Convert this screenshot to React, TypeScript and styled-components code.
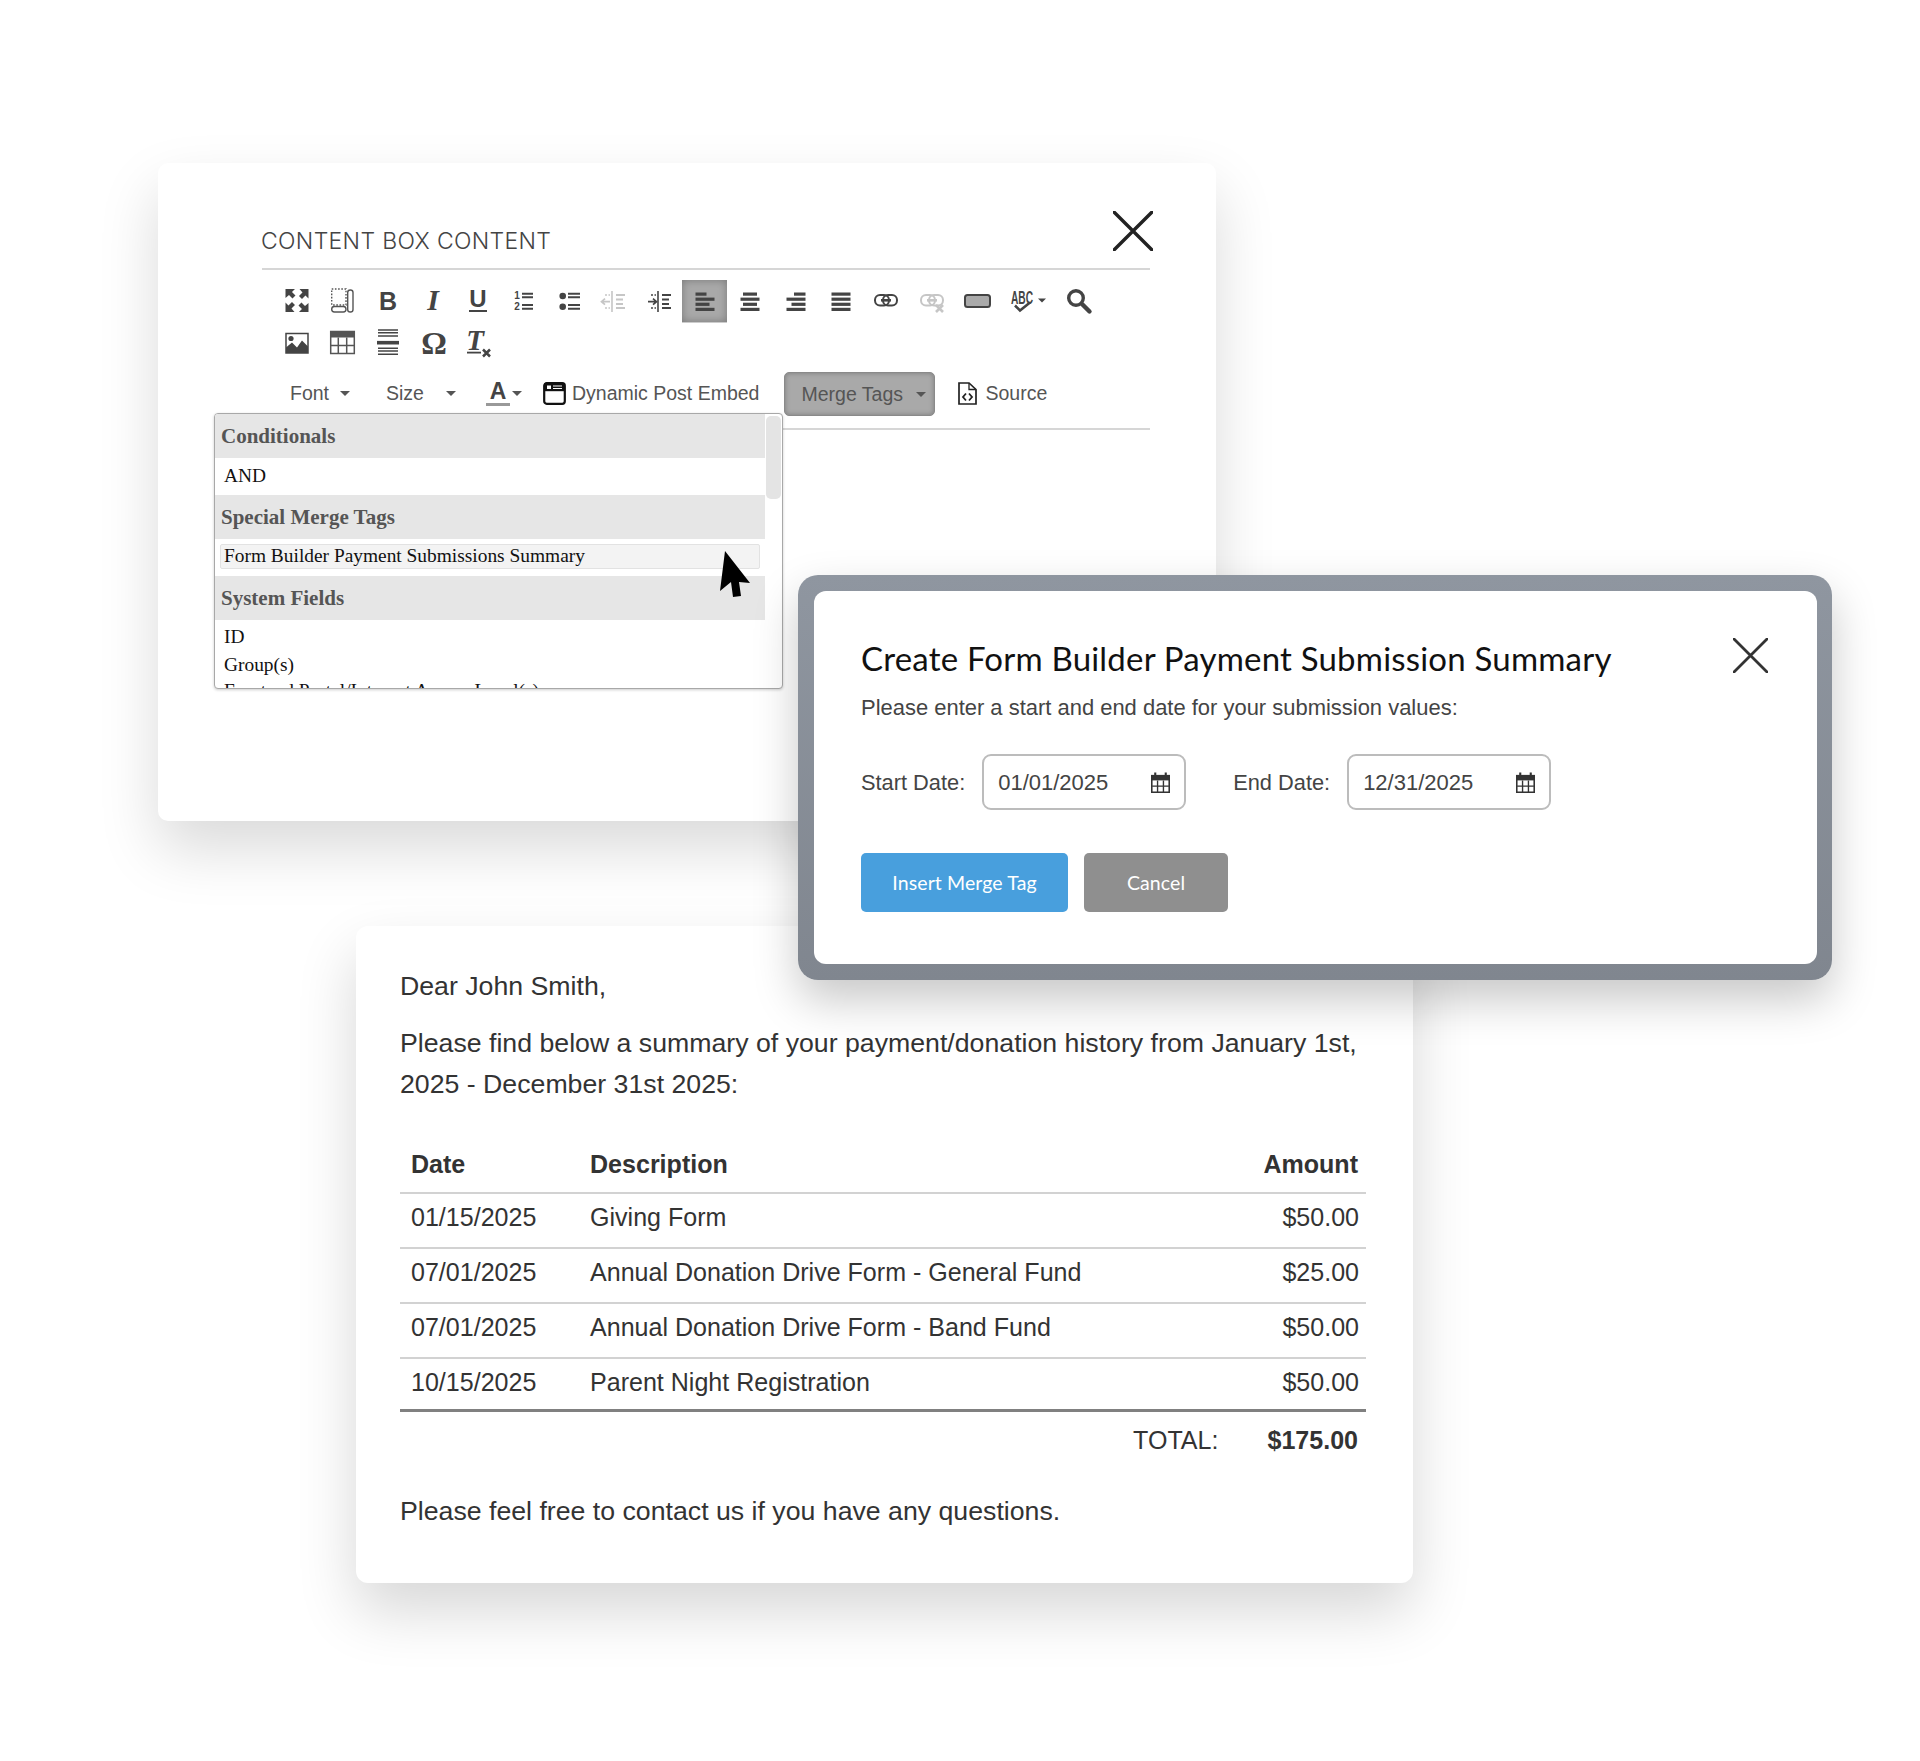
import { ReactNode } from 'react';
import styled, { createGlobalStyle } from 'styled-components';

const GlobalStyle = createGlobalStyle`
    html, body {
        margin: 0;
        padding: 0;
        background: #fff;
    }
    * {
        box-sizing: border-box;
    }
`

const Canvas = styled('div')`
    position: relative;
    width: 1920px;
    height: 1761px;
    overflow: hidden;
    background: #fff;
    font-family: "Liberation Sans", Arial, sans-serif;
`

const EditorCard = styled('section')`
    position: absolute;
    left: 158px;
    top: 163px;
    width: 1058px;
    height: 658px;
    padding: 48px 66px 0 104px;
    background: #fff;
    border-radius: 10px;
    box-shadow: 0 28px 60px rgba(0, 0, 0, 0.15);
`

const EditorHeader = styled('header')`
    display: flex;
    justify-content: space-between;
    align-items: flex-start;
    width: 888px;
    height: 59px;
    border-bottom: 2px solid #d6d6d6;
`

const EditorTitle = styled('h2')`
    margin: 16px 0 0 -1px;
    font-family: Inter, sans-serif;
    font-size: 23px;
    line-height: 28px;
    font-weight: 300;
    color: #444;
    letter-spacing: 0.33px;
`

const CrossIcon = styled('svg')<{ $bleed?: number }>`
    margin-right: ${p => -(p.$bleed ?? 0)}px;
    flex: none;
`

const ToolRow = styled('div')`
    display: flex;
    padding-left: 12px;
    height: 43px;
`

const ToolRows = styled('div')`
    margin-top: 10px;
`

const ToolButton = styled('div')<{ $active?: boolean; $w?: number }>`
    flex: none;
    width: ${p => p.$w ?? 45.33}px;
    height: 43px;
    ${p => p.$active && `
        background: #a9a9a9;
        box-shadow: inset 0 0 8px #777;
        border-bottom: 1px solid #ccc;
    `}
`

const FormatRow = styled('div')`
    display: flex;
    align-items: center;
    width: 888px;
    height: 64px;
    padding: 7px 0 13px 28px;
    border-bottom: 2px solid #d6d6d6;
    font-size: 19.5px;
    color: #555;
`

const FormatItem = styled('span')<{ $left?: number }>`
    display: inline-flex;
    align-items: center;
    margin-left: ${p => p.$left ?? 0}px;
    margin-bottom: 2px;
`

const Caret = styled('i')<{ $left: number }>`
    display: inline-block;
    width: 0;
    height: 0;
    margin-left: ${p => p.$left}px;
    border-left: 5px solid transparent;
    border-right: 5px solid transparent;
    border-top: 5px solid #555;
`

const MergeButton = styled('div')`
    display: flex;
    align-items: center;
    width: 151px;
    height: 44px;
    margin-left: 25px;
    padding-left: 16px;
    background: #a9a9a9;
    border: 1px solid #8a8a8a;
    border-radius: 5px;
    box-shadow: inset 0 0 5px #7a7a7a;
    color: #555;
`

const Dropdown = styled('div')`
    position: absolute;
    left: 56px;
    top: 250px;
    display: flex;
    width: 569px;
    height: 276px;
    overflow: hidden;
    background: #fff;
    border: 1px solid #a8a8a8;
    border-radius: 4px;
    box-shadow: 0 1px 3px rgba(0, 0, 0, 0.2);
    font-family: "Liberation Serif", "Times New Roman", serif;
`

const DropdownList = styled('div')`
    width: 550px;
    flex: none;
`

const GroupLabel = styled('div')`
    display: flex;
    align-items: center;
    height: 44px;
    padding-left: 6px;
    background: #e6e6e6;
    color: #555;
    font-size: 21px;
    font-weight: 700;
`

const MenuItem = styled('div')<{ $h: number; $lift?: number }>`
    display: flex;
    align-items: center;
    height: ${p => p.$h}px;
    padding-left: 9px;
    padding-bottom: ${p => p.$lift ?? 0}px;
    color: #111;
    font-size: 19.4px;
    white-space: nowrap;
`

const HoverSlot = styled('div')`
    height: 37px;
    padding: 5px 5px 0 5px;
`

const HoverItem = styled('div')`
    display: flex;
    align-items: center;
    height: 25px;
    padding: 0 0 1px 3px;
    background: #f3f3f3;
    border: 1px solid #e2e2e2;
    border-radius: 2px;
    color: #111;
    font-size: 19.4px;
    white-space: nowrap;
`

const ScrollThumb = styled('div')`
    width: 15px;
    height: 83px;
    margin: 2px 0 0 1px;
    background: #e4e4e4;
    border-radius: 5px;
`

const Pointer = styled('svg')`
    position: absolute;
    left: 500px;
    top: 132px;
`

const LetterCard = styled('section')`
    position: absolute;
    left: 356px;
    top: 926px;
    width: 1057px;
    height: 657px;
    padding: 40px 47px 0 44px;
    background: #fff;
    border-radius: 12px;
    box-shadow: 0 28px 60px rgba(0, 0, 0, 0.16);
    color: #333;
    font-size: 26.7px;
    line-height: 41px;
`

const Paragraph = styled('p')`
    margin: 0 0 16px;
`

const Summary = styled('table')`
    width: 100%;
    margin-top: 33px;
    border-collapse: collapse;
    table-layout: fixed;
    font-size: 25.05px;
`

const HeadCell = styled('th')<{ $w?: number; $right?: boolean }>`
    width: ${p => (p.$w ? `${p.$w}px` : 'auto')};
    height: 55px;
    padding: 0 ${p => (p.$right ? 8 : 11)}px 2px 11px;
    text-align: ${p => (p.$right ? 'right' : 'left')};
    font-weight: 700;
    border-bottom: 2px solid #d2d2d2;
`

const BodyCell = styled('td')<{ $right?: boolean; $last?: boolean }>`
    height: ${p => (p.$last ? 52.5 : 55)}px;
    padding: 0 ${p => (p.$right ? 7 : 11)}px ${p => (p.$last ? 4 : 6.5)}px 11px;
    text-align: ${p => (p.$right ? 'right' : 'left')};
    border-bottom: ${p => (p.$last ? '3px solid #808080' : '2px solid #d2d2d2')};
`

const TotalRow = styled('div')`
    display: flex;
    justify-content: flex-end;
    margin-top: 8px;
    padding-right: 8px;
    font-size: 25.05px;
`

const TotalAmount = styled('strong')`
    margin-left: 49px;
`

const ClosingLine = styled('p')`
    margin: 30px 0 0;
`

const ModalFrame = styled('section')`
    position: absolute;
    left: 798px;
    top: 575px;
    width: 1034px;
    height: 405px;
    padding: 16px 15px 16px 16px;
    background: linear-gradient(#8f96a0, #80868f);
    border-radius: 20px;
    box-shadow: 0 20px 45px rgba(0, 0, 0, 0.22);
`

const ModalBody = styled('div')`
    height: 100%;
    padding: 47px 49px 0 47px;
    background: #fff;
    border-radius: 12px;
`

const ModalHeader = styled('header')`
    display: flex;
    justify-content: space-between;
    align-items: flex-start;
    height: 52px;
`

const ModalTitle = styled('h2')`
    margin: 0;
    font-family: Lato, sans-serif;
    font-size: 33px;
    line-height: 40px;
    font-weight: 400;
    color: #111;
    letter-spacing: 0.2px;
`

const ModalText = styled('p')`
    margin: 5px 0 0;
    font-size: 21.96px;
    line-height: 26px;
    color: #444;
`

const DateRow = styled('div')`
    display: flex;
    align-items: center;
    margin-top: 33px;
    color: #444;
    font-size: 21.8px;
`

const DateLabel = styled('label')<{ $left?: number }>`
    margin-left: ${p => p.$left ?? 0}px;
    margin-right: 17px;
    padding-top: 1px;
`

const DateField = styled('div')`
    display: flex;
    align-items: center;
    justify-content: space-between;
    width: 204px;
    height: 56px;
    padding: 1px 13px 0 14px;
    border: 2px solid #bcbcbc;
    border-radius: 9px;
    color: #444;
    font-size: 22px;
`

const ButtonRow = styled('div')`
    display: flex;
    gap: 16px;
    margin-top: 43px;
`

const ActionButton = styled('button')<{ $tone: string; $w: number }>`
    width: ${p => p.$w}px;
    height: 59px;
    padding: 0;
    border: 0;
    border-radius: 5px;
    background: ${p => p.$tone};
    color: #fff;
    font-family: Lato, sans-serif;
    font-size: 19.5px;
    font-weight: 400;
    letter-spacing: 0.1px;
`

const SERIF = '"Liberation Serif", serif';
const SANS = '"Liberation Sans", sans-serif';
const INK = '#444';

const Bars = ({ rows }: { rows: [number, number][] }) => (
    <>
        {rows.map(([x, w], key) => (
            <rect key={key} x={x} y={-8 + key * 5.1} width={w} height={3.2} fill={INK} />
        ))}
    </>
);

const indentGlyph = (arrow: string) => (
    <g>
        <path d="M-2 -9.5V11.5" stroke={INK} strokeWidth="1.6" />
        <path d={arrow} stroke={INK} strokeWidth="1.7" fill="none" />
        <path d="M-9 -5.5H-4M-9 7.5H-4" stroke={INK} strokeWidth="1.7" strokeDasharray="2 1.5" />
        <path d="M2 -5.5H11M2 -1H9M2 3.5H9M2 7.5H11" stroke={INK} strokeWidth="1.8" />
    </g>
);

const chain = (color: string) => (
    <g fill="none" stroke={color} strokeWidth="2">
        <rect x="-11" y="-5.5" width="14" height="10.5" rx="5" />
        <rect x="-3" y="-5.5" width="14" height="10.5" rx="5" />
        <path d="M-5 -.2H5" strokeWidth="2.6" />
    </g>
);

const corner = 'M-11.5 -11.5h9.5l-3 3 3.5 3.5-3 3-3.5-3.5-3.5 3z';

const toolbarIcons: Record<string, ReactNode> = {
    expand: (
        <g fill={INK}>
            {[0, 90, 180, 270].map(r => <path key={r} d={corner} transform={`rotate(${r})`} />)}
        </g>
    ),
    blocks: (
        <g fill="none" stroke="#555" strokeWidth="1.4">
            <rect x="-10.3" y="-11.5" width="14.3" height="16" strokeDasharray="1.6 1.6" />
            <rect x="5.7" y="-10.5" width="5.3" height="22" rx="2.6" />
            <rect x="-10.3" y="6" width="14.3" height="5.5" rx="2.7" />
        </g>
    ),
    bold: <text x="0" y="9" textAnchor="middle" fontFamily={SANS} fontWeight="700" fontSize="25" fill={INK}>B</text>,
    italic: <text x="0" y="9" textAnchor="middle" fontFamily={SERIF} fontWeight="700" fontStyle="italic" fontSize="30" fill={INK}>I</text>,
    underline: (
        <g fill={INK}>
            <text x="0" y="6" textAnchor="middle" fontFamily={SANS} fontWeight="700" fontSize="24">U</text>
            <rect x="-9" y="9.5" width="18" height="2" />
        </g>
    ),
    ol: (
        <g fill={INK}>
            <text x="-7" y="-1.5" textAnchor="middle" fontFamily={SANS} fontWeight="700" fontSize="10">1</text>
            <text x="-7" y="10" textAnchor="middle" fontFamily={SANS} fontWeight="700" fontSize="10">2</text>
            <path d="M-2 -6.8H9M-2 -3.2H9M-2 4.5H9M-2 8.2H9" stroke={INK} strokeWidth="2" />
        </g>
    ),
    ul: (
        <g fill={INK}>
            <circle cx="-6.3" cy="-4.5" r="3.3" />
            <circle cx="-6.3" cy="6.2" r="3.3" />
            <path d="M-1 -6.8H11M-1 -3.2H11M-1 4.5H11M-1 8.2H11" stroke={INK} strokeWidth="2" />
        </g>
    ),
    outdent: <g opacity="0.3">{indentGlyph('M-4 1.2H-12M-9 -1.8L-12.5 1.2-9 4.2')}</g>,
    indent: indentGlyph('M-12 1.2H-4M-7 -1.8L-3.5 1.2-7 4.2'),
    left: <Bars rows={[[-9.5, 11], [-9.5, 19], [-9.5, 14], [-9.5, 19]]} />,
    center: <Bars rows={[[-7, 14], [-9.5, 19], [-7, 14], [-9.5, 19]]} />,
    right: <Bars rows={[[-2, 11.5], [-9.5, 19], [-4.5, 14], [-9.5, 19]]} />,
    justify: <Bars rows={[[-9.5, 19], [-9.5, 19], [-9.5, 19], [-9.5, 19]]} />,
    link: chain(INK),
    unlink: (
        <g opacity="0.3">
            {chain(INK)}
            <path d="M4 4.5L11 11.5M11 4.5L4 11.5" stroke={INK} strokeWidth="2.6" />
        </g>
    ),
    field: <rect x="-12" y="-5.5" width="25" height="12" rx="2.5" fill="#aaa" stroke={INK} strokeWidth="2" />,
    spell: (
        <g fill={INK}>
            <text x="-11" y="3.5" fontFamily={SANS} fontWeight="700" fontSize="18" textLength="22" lengthAdjust="spacingAndGlyphs">ABC</text>
            <path d="M-7 5L-2 10 8 2" fill="none" stroke={INK} strokeWidth="2.6" />
            <path d="M16 -2H24L20 2z" />
        </g>
    ),
    search: (
        <g fill="none" stroke={INK} transform="translate(0 -1)">
            <circle cx="-3" cy="-1.5" r="7.3" strokeWidth="3.4" />
            <path d="M3 4.5L10.5 12" strokeWidth="4.4" strokeLinecap="round" />
        </g>
    ),
    image: (
        <g>
            <rect x="-11" y="-10" width="22" height="19.5" fill="none" stroke={INK} strokeWidth="1.5" />
            <circle cx="-6" cy="-5" r="2.6" fill={INK} />
            <path d="M-11 9.5V4L-5 -1 0 4 5 -3 11 3V9.5z" fill={INK} />
        </g>
    ),
    table: (
        <g>
            <rect x="-12" y="-12.5" width="25" height="6.5" fill="#555" />
            <rect x="-11.3" y="-12" width="23.6" height="22" fill="none" stroke="#555" strokeWidth="1.5" />
            <path d="M-3.7 -6V10M4.7 -6V10M-11 2H12" stroke="#555" strokeWidth="1.5" />
        </g>
    ),
    rule: (
        <g stroke={INK}>
            <path d="M-10 -13.5H10M-10 -10.8H10M-10 -7.5H10M-10 4.8H10M-10 7.5H10M-10 10.8H10" strokeWidth="1.6" />
            <path d="M-11 -.8H11" strokeWidth="3.6" />
        </g>
    ),
    omega: <text x="1" y="10" textAnchor="middle" fontFamily={SERIF} fontWeight="700" fontSize="32" fill={INK}>Ω</text>,
    clear: (
        <g fill={INK}>
            <text x="-3" y="6.5" textAnchor="middle" fontFamily={SERIF} fontWeight="700" fontStyle="italic" fontSize="29">T</text>
            <rect x="-11" y="8.2" width="14" height="1.8" />
            <path d="M5 6L12 13M12 6L5 13" stroke={INK} strokeWidth="2.5" />
        </g>
    ),
};

const Tool = ({ name, active, width = 45.33 }: { name: string; active?: boolean; width?: number }) => (
    <ToolButton $active={active} $w={width}>
        <svg width={width} height="43" viewBox={`-23 -20.5 ${width} 43`}>{toolbarIcons[name]}</svg>
    </ToolButton>
);

const Cross = ({ size, color, weight, bleed }: { size: number; color: string; weight: number; bleed?: number }) => (
    <CrossIcon $bleed={bleed} width={size} height={size} viewBox={`0 0 ${size} ${size}`}>
        <path d={`M1 1L${size - 1} ${size - 1}M${size - 1} 1L1 ${size - 1}`} stroke={color} strokeWidth={weight} strokeLinecap="round" />
    </CrossIcon>
);

const CalendarGlyph = () => (
    <svg width="21" height="21" viewBox="0 0 20 20">
        <rect x="1" y="3" width="18" height="5" fill="#333" />
        <path d="M5 .5V4M15 .5V4" stroke="#333" strokeWidth="2" />
        <rect x="1.7" y="3.5" width="16.6" height="15.8" fill="none" stroke="#333" strokeWidth="1.5" />
        <path d="M7.2 8V19M12.8 8V19M2 13.4H18" stroke="#333" strokeWidth="1.3" />
    </svg>
);

const rows = [
    { date: '01/15/2025', description: 'Giving Form', amount: '$50.00' },
    { date: '07/01/2025', description: 'Annual Donation Drive Form - General Fund', amount: '$25.00' },
    { date: '07/01/2025', description: 'Annual Donation Drive Form - Band Fund', amount: '$50.00' },
    { date: '10/15/2025', description: 'Parent Night Registration', amount: '$50.00' },
];

const firstRow = ['expand', 'blocks', 'bold', 'italic', 'underline', 'ol', 'ul', 'outdent', 'indent', 'left', 'center', 'right', 'justify', 'link', 'unlink', 'field'];
const secondRow = ['image', 'table', 'rule', 'omega', 'clear'];

const App = () => {
    return (
        <>
            <GlobalStyle />
            <Canvas>
                <EditorCard>
                    <EditorHeader>
                        <EditorTitle>CONTENT BOX CONTENT</EditorTitle>
                        <Cross size={40} color="#222" weight={3.4} bleed={3} />
                    </EditorHeader>
                    <ToolRows>
                        <ToolRow>
                            {firstRow.map(name => <Tool key={name} name={name} active={name === 'left'} />)}
                            <Tool name="spell" width={57} />
                            <Tool name="search" />
                        </ToolRow>
                        <ToolRow>
                            {secondRow.map(name => <Tool key={name} name={name} />)}
                        </ToolRow>
                    </ToolRows>
                    <FormatRow>
                        <FormatItem>Font<Caret $left={11} /></FormatItem>
                        <FormatItem $left={36}>Size<Caret $left={22} /></FormatItem>
                        <FormatItem $left={30}>
                            <svg width="24" height="28" viewBox="0 0 24 28">
                                <text x="12" y="20" textAnchor="middle" fontFamily={SANS} fontWeight="700" fontSize="23" fill="#444">A</text>
                                <rect x="0" y="24" width="24" height="3" fill="#999" />
                            </svg>
                            <Caret $left={2} />
                        </FormatItem>
                        <FormatItem $left={21}>
                            <svg width="23" height="23" viewBox="0 0 23 23">
                                <rect x="1.2" y="1.2" width="20.6" height="20.6" rx="2.5" fill="none" stroke="#111" strokeWidth="2.2" />
                                <rect x="1.2" y="1.2" width="20.6" height="8" fill="#111" />
                                <rect x="4" y="3.5" width="4" height="3.5" fill="#fff" />
                                <path d="M10 4H19M10 6.5H19" stroke="#fff" strokeWidth="1.2" />
                            </svg>
                        </FormatItem>
                        <FormatItem $left={6}>Dynamic Post Embed</FormatItem>
                        <MergeButton>Merge Tags<Caret $left={13} /></MergeButton>
                        <FormatItem $left={23}>
                            <svg width="19" height="23" viewBox="0 0 19 23">
                                <path d="M1 1H11L18 7.5V22H1z" fill="none" stroke="#222" strokeWidth="1.7" />
                                <path d="M11 1V7.5H18" fill="none" stroke="#222" strokeWidth="1.3" />
                                <path d="M8 11.5L5 15 8 18.5M11 11.5L14 15 11 18.5" fill="none" stroke="#222" strokeWidth="1.8" />
                            </svg>
                        </FormatItem>
                        <FormatItem $left={8}>Source</FormatItem>
                    </FormatRow>
                    <Dropdown>
                        <DropdownList>
                            <GroupLabel>Conditionals</GroupLabel>
                            <MenuItem $h={37} $lift={2}>AND</MenuItem>
                            <GroupLabel>Special Merge Tags</GroupLabel>
                            <HoverSlot>
                                <HoverItem>Form Builder Payment Submissions Summary</HoverItem>
                            </HoverSlot>
                            <GroupLabel>System Fields</GroupLabel>
                            <MenuItem $h={34}>ID</MenuItem>
                            <MenuItem $h={22}>Group(s)</MenuItem>
                            <MenuItem $h={30}>Frontend Portal/Intranet Access Level(s)</MenuItem>
                        </DropdownList>
                        <ScrollThumb />
                        <Pointer width="40" height="56" viewBox="715 548 40 56">
                            <path d="M725 553L720 593 731 584 733 599 741 598 739 584 750 585z" fill="#000" />
                        </Pointer>
                    </Dropdown>
                </EditorCard>

                <LetterCard>
                    <Paragraph>Dear John Smith,</Paragraph>
                    <Paragraph>
                        Please find below a summary of your payment/donation history from January 1st,<br />
                        2025 - December 31st 2025:
                    </Paragraph>
                    <Summary>
                        <thead>
                            <tr>
                                <HeadCell $w={179}>Date</HeadCell>
                                <HeadCell>Description</HeadCell>
                                <HeadCell $w={140} $right>Amount</HeadCell>
                            </tr>
                        </thead>
                        <tbody>
                            {rows.map((row, key) => (
                                <tr key={key}>
                                    <BodyCell $last={key === rows.length - 1}>{row.date}</BodyCell>
                                    <BodyCell $last={key === rows.length - 1}>{row.description}</BodyCell>
                                    <BodyCell $last={key === rows.length - 1} $right>{row.amount}</BodyCell>
                                </tr>
                            ))}
                        </tbody>
                    </Summary>
                    <TotalRow>
                        TOTAL:<TotalAmount>$175.00</TotalAmount>
                    </TotalRow>
                    <ClosingLine>Please feel free to contact us if you have any questions.</ClosingLine>
                </LetterCard>

                <ModalFrame>
                    <ModalBody>
                        <ModalHeader>
                            <ModalTitle>Create Form Builder Payment Submission Summary</ModalTitle>
                            <Cross size={35} color="#333" weight={2.8} />
                        </ModalHeader>
                        <ModalText>Please enter a start and end date for your submission values:</ModalText>
                        <DateRow>
                            <DateLabel>Start Date:</DateLabel>
                            <DateField>01/01/2025<CalendarGlyph /></DateField>
                            <DateLabel $left={47}>End Date:</DateLabel>
                            <DateField>12/31/2025<CalendarGlyph /></DateField>
                        </DateRow>
                        <ButtonRow>
                            <ActionButton $tone="#489fdd" $w={207}>Insert Merge Tag</ActionButton>
                            <ActionButton $tone="#8f8f8f" $w={144}>Cancel</ActionButton>
                        </ButtonRow>
                    </ModalBody>
                </ModalFrame>
            </Canvas>
        </>
    )
}

export default App
